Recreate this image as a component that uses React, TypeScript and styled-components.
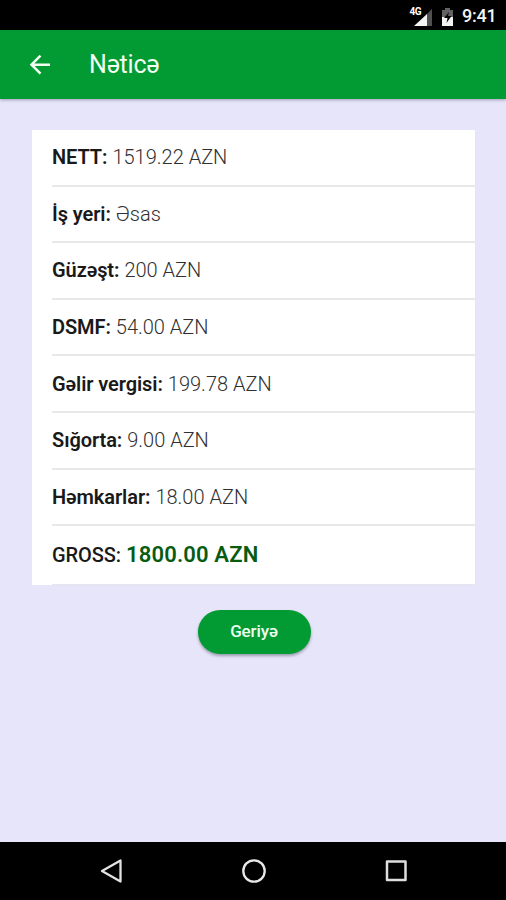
import React from "react";
import styled, { createGlobalStyle } from "styled-components";

const GlobalStyle = createGlobalStyle`
  * { box-sizing: border-box; }
  body { margin: 0; background: #e6e5fa; }
`;

const Screen = styled.div`
  display: flex;
  flex-direction: column;
  width: 506px;
  height: 900px;
  overflow: hidden;
  background: #e6e5fa;
  color: #191919;
  font-family: Roboto, "Noto Sans", sans-serif;
`;

const StatusBar = styled.div`
  display: flex;
  flex: none;
  align-items: center;
  justify-content: flex-end;
  height: 30px;
  padding: 2px 9px 0 0;
  background: #000;
  color: #f4f4f4;
`;

const Clock = styled.span`
  width: 35px;
  margin-left: 7px;
  font-size: 18px;
  font-weight: 500;
  letter-spacing: -0.2px;
  line-height: 28px;
  white-space: nowrap;
`;

const Header = styled.header`
  display: flex;
  flex: none;
  align-items: center;
  height: 69px;
  padding-left: 28px;
  background: #029a33;
  color: #f3fff3;
  box-shadow: 0 1px 3px rgba(60, 50, 80, 0.4);
`;

const BackButton = styled.button`
  display: flex;
  width: 24px;
  height: 24px;
  padding: 0;
  border: 0;
  background: none;
  color: inherit;
`;

const Title = styled.h1`
  margin: 0 0 0 37px;
  padding-top: 1px;
  font-size: 25px;
  font-weight: 400;
  letter-spacing: -0.2px;
  line-height: 32px;
`;

const Main = styled.main`
  display: flex;
  flex: 1;
  flex-direction: column;
  align-items: flex-start;
  padding: 31px 0 0 32px;
`;

const Card = styled.ul`
  width: 443px;
  height: 455px;
  margin: 0;
  padding: 0 0 0 20px;
  background: #fff;
  list-style: none;
`;

const Row = styled.li<{ $last?: boolean }>`
  display: flex;
  align-items: center;
  gap: 5px;
  height: ${(p) => (p.$last ? 58.8 : 56.6)}px;
  border-bottom: ${(p) => (p.$last ? "1px solid #e5e6ed" : "2px solid #e8e8e8")};
  line-height: 28px;
  white-space: nowrap;
`;

const Label = styled.span<{ $medium?: boolean }>`
  font-size: 20px;
  font-weight: ${(p) => (p.$medium ? 500 : 600)};
  letter-spacing: -0.08px;
`;

const Value = styled.span<{ $total?: boolean }>`
  color: ${(p) => (p.$total ? "#075c10" : "#303030")};
  font-size: ${(p) => (p.$total ? 22 : 20)}px;
  font-weight: ${(p) => (p.$total ? 600 : 300)};
  letter-spacing: ${(p) => (p.$total ? 0.15 : 0)}px;
`;

const ReturnButton = styled.button`
  width: 113px;
  height: 44px;
  margin: 25px 0 0 165.5px;
  padding: 0 0 2px;
  border: 0;
  border-radius: 22px;
  background: #029a33;
  color: #effff0;
  box-shadow: 0 2px 3px rgba(40, 50, 60, 0.4);
  font: 500 17px Roboto, "Noto Sans", sans-serif;
  letter-spacing: -0.1px;
`;

const NavBar = styled.nav`
  display: flex;
  flex: none;
  align-items: center;
  justify-content: space-between;
  height: 58px;
  padding: 0 97px 0 98px;
  background: #000;
`;

const rows = [
  { label: "NETT:", value: "1519.22 AZN" },
  { label: "İş yeri:", value: "Əsas" },
  { label: "Güzəşt:", value: "200 AZN" },
  { label: "DSMF:", value: "54.00 AZN" },
  { label: "Gəlir vergisi:", value: "199.78 AZN" },
  { label: "Sığorta:", value: "9.00 AZN" },
  { label: "Həmkarlar:", value: "18.00 AZN" },
  { label: "GROSS:", value: "1800.00 AZN", total: true },
];

const StatusIcons = () => (
  <svg width="46" height="24" viewBox="0 0 46 24" fill="none">
    <path d="M23 5v17h-6V11z" fill="#505050" />
    <path d="M18 10v12H5z" fill="#f4f4f4" />
    <text x="0.5" y="10.5" fill="#fff" stroke="#000" strokeWidth="1.2" paintOrder="stroke" fontFamily="Roboto" fontSize="10" fontWeight="700" letterSpacing="-0.4">4G</text>
    <path d="M33 6h3V4h5v2h3v7H33z" fill="#626262" />
    <path d="M33 13h11v9H33z" fill="#f4f4f4" />
    <path d="m40 8-5 6h3.5l-1 5 5-7H39z" fill="#050505" />
  </svg>
);

const App = () => (
  <>
    <GlobalStyle />
    <Screen>
      <StatusBar>
        <StatusIcons />
        <Clock>9:41</Clock>
      </StatusBar>
      <Header>
        <BackButton aria-label="Back">
          <svg width="24" height="24" viewBox="0 0 24 24" fill="none" stroke="currentColor" strokeWidth="2.5">
            <path d="M22 11.7H4M12.5 2.7l-9 9 9 9" />
          </svg>
        </BackButton>
        <Title>Nəticə</Title>
      </Header>
      <Main>
        <Card>
          {rows.map((r) => (
            <Row key={r.label} $last={r.total}>
              <Label $medium={r.total}>{r.label}</Label>
              <Value $total={r.total}>{r.value}</Value>
            </Row>
          ))}
        </Card>
        <ReturnButton>Geriyə</ReturnButton>
      </Main>
      <NavBar>
        <svg width="26" height="26" viewBox="0 0 26 26" fill="none" stroke="#e2e2e2" strokeWidth="2.3" strokeLinejoin="round">
          <path d="M22.5 2.5v21L4 13z" />
        </svg>
        <svg width="26" height="26" viewBox="0 0 26 26" fill="none" stroke="#e8e8e8" strokeWidth="2.3">
          <circle cx="13" cy="13" r="10.7" />
        </svg>
        <svg width="26" height="26" viewBox="0 0 26 26" fill="none" stroke="#dedede" strokeWidth="2.5" strokeLinejoin="round">
          <path d="M4 3.5h18.5V22H4z" />
        </svg>
      </NavBar>
    </Screen>
  </>
);

export default App;
